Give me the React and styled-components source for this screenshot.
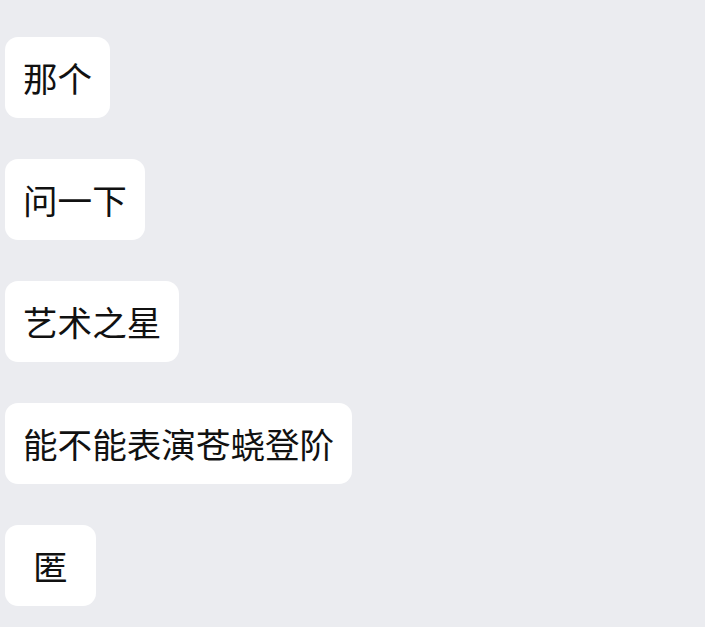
import React from 'react';
import styled, { createGlobalStyle } from 'styled-components';

const messages = ['那个', '问一下', '艺术之星', '能不能表演苍蛲登阶', '匿'];

const GlobalStyle = createGlobalStyle`
  html, body {
    margin: 0;
    padding: 0;
    background-color: #EBECF0;
  }
`;

const Container = styled.div`
  display: flex;
  flex-direction: column;
  align-items: flex-start;
  gap: 41px;
  padding: 37px 0 0 5px;
  min-height: 627px;
  box-sizing: border-box;
  background-color: #EBECF0;
  font-family: 'Noto Sans CJK SC', 'Noto Sans', sans-serif;
`;

const Bubble = styled.div`
  background-color: #FFF;
  border-radius: 13px;
  padding: 18px ${({ $wide }) => ($wide ? '28px' : '18px')};
  font-size: 34.6px;
  line-height: 45px;
  color: #111;
  white-space: nowrap;
`;

const App = () => (
  <Container>
    <GlobalStyle />
    {messages.map((text) => (
      <Bubble key={text} $wide={text.length === 1}>{text}</Bubble>
    ))}
  </Container>
);

export default App;
